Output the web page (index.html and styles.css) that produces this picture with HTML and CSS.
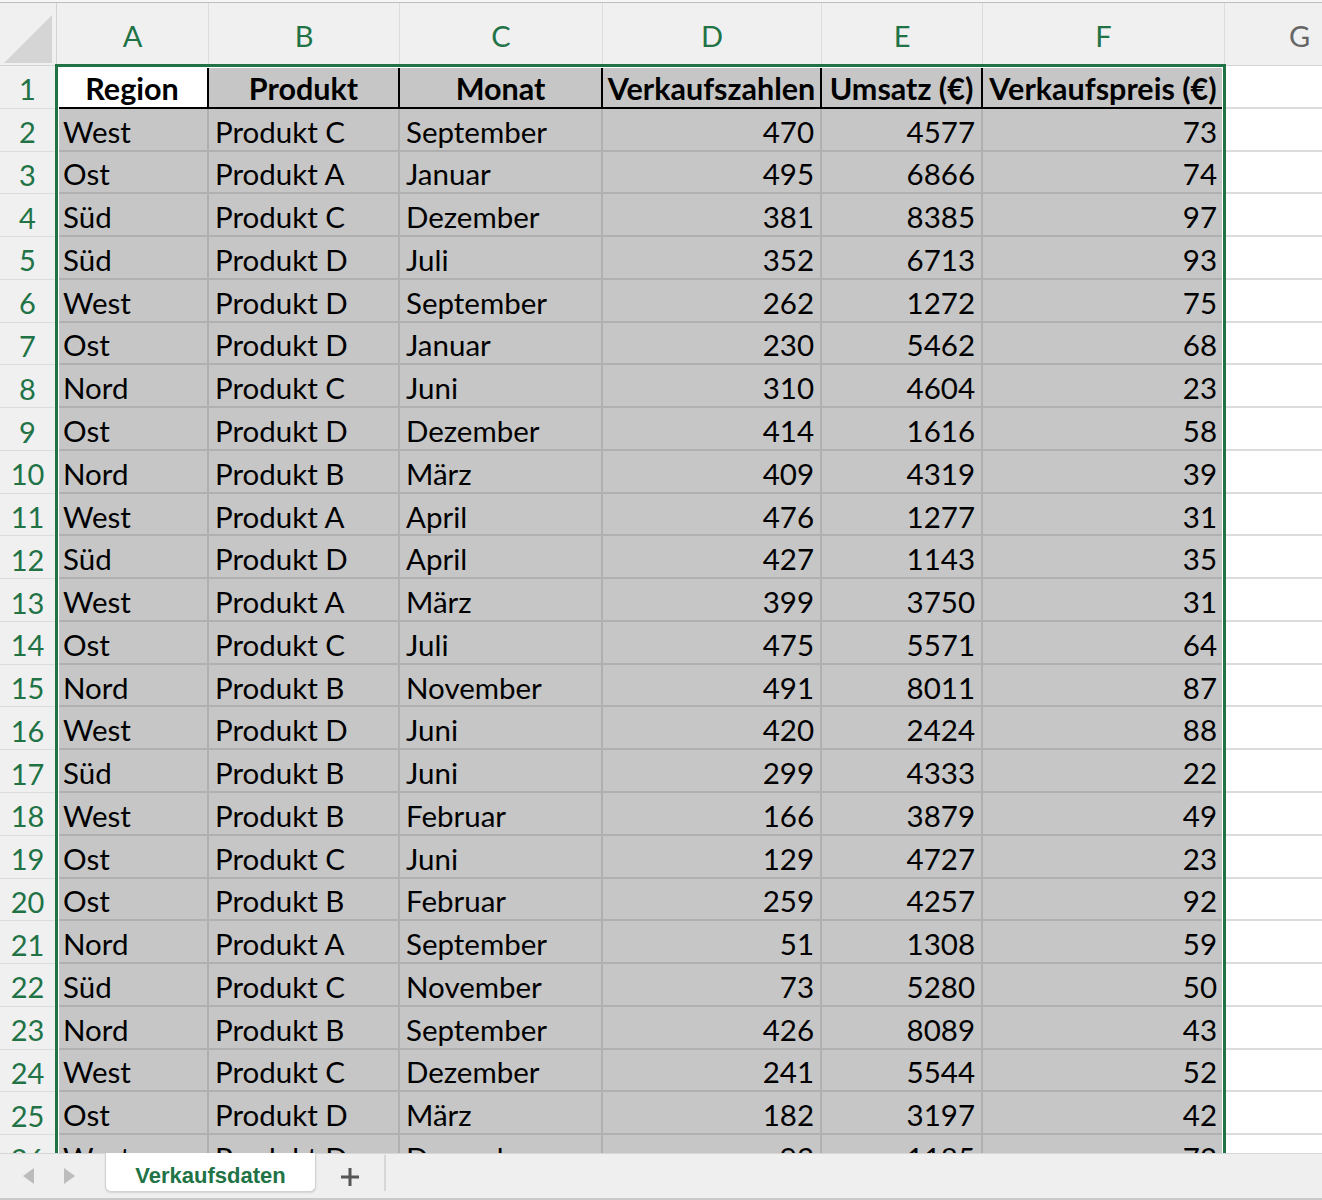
FILE: index.html
```html
<!DOCTYPE html>
<html lang="de">
<head>
<meta charset="utf-8">
<title>Verkaufsdaten</title>
<link rel="stylesheet" href="styles.css">
</head>
<body>
<div class="app">
  <div class="sheet">
    <div class="topline"></div>
    <div class="grid">
      <div class="corner"><span class="tri"></span></div>
      <div class="ch on">A</div><div class="ch on">B</div><div class="ch on">C</div><div class="ch on">D</div><div class="ch on">E</div><div class="ch on">F</div><div class="ch">G</div>

      <div class="rh">1</div><div class="c hd act">Region</div><div class="c hd">Produkt</div><div class="c hd">Monat</div><div class="c hd">Verkaufszahlen</div><div class="c hd">Umsatz (€)</div><div class="c hd">Verkaufspreis (€)</div><div class="e"></div>
      <div class="rh">2</div><div class="c">West</div><div class="c">Produkt C</div><div class="c">September</div><div class="c n">470</div><div class="c n">4577</div><div class="c n">73</div><div class="e"></div>
      <div class="rh">3</div><div class="c">Ost</div><div class="c">Produkt A</div><div class="c">Januar</div><div class="c n">495</div><div class="c n">6866</div><div class="c n">74</div><div class="e"></div>
      <div class="rh">4</div><div class="c">Süd</div><div class="c">Produkt C</div><div class="c">Dezember</div><div class="c n">381</div><div class="c n">8385</div><div class="c n">97</div><div class="e"></div>
      <div class="rh">5</div><div class="c">Süd</div><div class="c">Produkt D</div><div class="c">Juli</div><div class="c n">352</div><div class="c n">6713</div><div class="c n">93</div><div class="e"></div>
      <div class="rh">6</div><div class="c">West</div><div class="c">Produkt D</div><div class="c">September</div><div class="c n">262</div><div class="c n">1272</div><div class="c n">75</div><div class="e"></div>
      <div class="rh">7</div><div class="c">Ost</div><div class="c">Produkt D</div><div class="c">Januar</div><div class="c n">230</div><div class="c n">5462</div><div class="c n">68</div><div class="e"></div>
      <div class="rh">8</div><div class="c">Nord</div><div class="c">Produkt C</div><div class="c">Juni</div><div class="c n">310</div><div class="c n">4604</div><div class="c n">23</div><div class="e"></div>
      <div class="rh">9</div><div class="c">Ost</div><div class="c">Produkt D</div><div class="c">Dezember</div><div class="c n">414</div><div class="c n">1616</div><div class="c n">58</div><div class="e"></div>
      <div class="rh">10</div><div class="c">Nord</div><div class="c">Produkt B</div><div class="c">März</div><div class="c n">409</div><div class="c n">4319</div><div class="c n">39</div><div class="e"></div>
      <div class="rh">11</div><div class="c">West</div><div class="c">Produkt A</div><div class="c">April</div><div class="c n">476</div><div class="c n">1277</div><div class="c n">31</div><div class="e"></div>
      <div class="rh">12</div><div class="c">Süd</div><div class="c">Produkt D</div><div class="c">April</div><div class="c n">427</div><div class="c n">1143</div><div class="c n">35</div><div class="e"></div>
      <div class="rh">13</div><div class="c">West</div><div class="c">Produkt A</div><div class="c">März</div><div class="c n">399</div><div class="c n">3750</div><div class="c n">31</div><div class="e"></div>
      <div class="rh">14</div><div class="c">Ost</div><div class="c">Produkt C</div><div class="c">Juli</div><div class="c n">475</div><div class="c n">5571</div><div class="c n">64</div><div class="e"></div>
      <div class="rh">15</div><div class="c">Nord</div><div class="c">Produkt B</div><div class="c">November</div><div class="c n">491</div><div class="c n">8011</div><div class="c n">87</div><div class="e"></div>
      <div class="rh">16</div><div class="c">West</div><div class="c">Produkt D</div><div class="c">Juni</div><div class="c n">420</div><div class="c n">2424</div><div class="c n">88</div><div class="e"></div>
      <div class="rh">17</div><div class="c">Süd</div><div class="c">Produkt B</div><div class="c">Juni</div><div class="c n">299</div><div class="c n">4333</div><div class="c n">22</div><div class="e"></div>
      <div class="rh">18</div><div class="c">West</div><div class="c">Produkt B</div><div class="c">Februar</div><div class="c n">166</div><div class="c n">3879</div><div class="c n">49</div><div class="e"></div>
      <div class="rh">19</div><div class="c">Ost</div><div class="c">Produkt C</div><div class="c">Juni</div><div class="c n">129</div><div class="c n">4727</div><div class="c n">23</div><div class="e"></div>
      <div class="rh">20</div><div class="c">Ost</div><div class="c">Produkt B</div><div class="c">Februar</div><div class="c n">259</div><div class="c n">4257</div><div class="c n">92</div><div class="e"></div>
      <div class="rh">21</div><div class="c">Nord</div><div class="c">Produkt A</div><div class="c">September</div><div class="c n">51</div><div class="c n">1308</div><div class="c n">59</div><div class="e"></div>
      <div class="rh">22</div><div class="c">Süd</div><div class="c">Produkt C</div><div class="c">November</div><div class="c n">73</div><div class="c n">5280</div><div class="c n">50</div><div class="e"></div>
      <div class="rh">23</div><div class="c">Nord</div><div class="c">Produkt B</div><div class="c">September</div><div class="c n">426</div><div class="c n">8089</div><div class="c n">43</div><div class="e"></div>
      <div class="rh">24</div><div class="c">West</div><div class="c">Produkt C</div><div class="c">Dezember</div><div class="c n">241</div><div class="c n">5544</div><div class="c n">52</div><div class="e"></div>
      <div class="rh">25</div><div class="c">Ost</div><div class="c">Produkt D</div><div class="c">März</div><div class="c n">182</div><div class="c n">3197</div><div class="c n">42</div><div class="e"></div>
      <div class="rh">26</div><div class="c">West</div><div class="c">Produkt D</div><div class="c">Dezember</div><div class="c n">93</div><div class="c n">1185</div><div class="c n">72</div><div class="e"></div>

      <div class="selection"></div>
    </div>
  </div>
  <div class="tabbar">
    <div class="navs">
      <svg class="nav" width="14" height="16" viewBox="0 0 14 16"><polygon points="12,0 12,16 1,8" /></svg>
      <svg class="nav" width="14" height="16" viewBox="0 0 14 16"><polygon points="2,0 2,16 13,8" /></svg>
    </div>
    <div class="tab">Verkaufsdaten</div>
    <div class="add"><svg width="20" height="20" viewBox="0 0 20 20"><rect x="8.5" y="1" width="3" height="18"/><rect x="1" y="8.5" width="18" height="3"/></svg></div>
    <div class="sep"></div>
  </div>
</div>
</body>
</html>
```

FILE: styles.css
```css
html, body {
  margin: 0;
  padding: 0;
  background: #ffffff;
}
.app {
  width: 1322px;
  height: 1200px;
  display: flex;
  flex-direction: column;
  overflow: hidden;
}
.sheet {
  flex: 1;
  overflow: hidden;
  position: relative;
}
.topline {
  height: 3px;
  background: #f6f6f6;
  border-bottom: 1px solid #bdbdbd;
  box-sizing: border-box;
}
.grid {
  position: relative;
  display: grid;
  grid-template-columns: 57px 152px 191px 203px 219px 161px 242px 150px;
  grid-template-rows: 63px;
  grid-auto-rows: 42.78px;
  font-family: Lato, "Open Sans", sans-serif;
}
.corner {
  background: #f0f0f0;
  border-right: 1px solid #d4d4d4;
  border-bottom: 1px solid #d4d4d4;
  position: relative;
}
.tri {
  position: absolute;
  right: 4px;
  bottom: 2px;
  width: 0;
  height: 0;
  border-left: 48px solid transparent;
  border-bottom: 48px solid #d5d5d5;
}
.ch {
  background: #f0f0f0;
  border-right: 1px solid #dcdcdc;
  border-bottom: 1px solid #d4d4d4;
  display: flex;
  align-items: center;
  justify-content: center;
  font-size: 29px;
  color: #666666;
  padding-top: 3px;
  box-sizing: border-box;
}
.ch.on {
  color: #217346;
  border-bottom: 2px solid #217346;
}
.rh {
  background: #f0f0f0;
  border-bottom: 1px solid #dcdcdc;
  border-right: 2px solid #217346;
  display: flex;
  align-items: center;
  justify-content: center;
  font-size: 29px;
  color: #217346;
  box-sizing: border-box;
  padding-top: 4px;
}
.c {
  background: #c6c6c6;
  border-right: 2px solid #b0b0b0;
  border-bottom: 2px solid #b0b0b0;
  display: flex;
  align-items: center;
  padding: 4px 6px 0 6px;
  font-size: 29.5px;
  color: #000000;
  white-space: nowrap;
  overflow: hidden;
  box-sizing: border-box;
}
.c.n {
  justify-content: flex-end;
}
.c.hd {
  font-weight: 700;
  font-size: 30.5px;
  justify-content: center;
  border-right-color: #000000;
  border-bottom-color: #000000;
  padding: 4px 0 0 0;
}
.c.act {
  background: #ffffff;
}
.e {
  background: #ffffff;
  border-bottom: 2px solid #dcdcdc;
}
.selection {
  position: absolute;
  left: 55px;
  top: 61px;
  width: 1171px;
  height: 2000px;
  border: 3px solid #217346;
  box-sizing: border-box;
  box-shadow: inset 0 0 0 1px #ffffff;
  pointer-events: none;
}
.tabbar {
  height: 47px;
  flex: none;
  background: #efefef;
  border-top: 1px solid #d6d6d6;
  border-bottom: 2px solid #c9c9c9;
  box-sizing: border-box;
  display: flex;
  align-items: flex-start;
  position: relative;
  z-index: 2;
}
.navs {
  display: flex;
  gap: 26px;
  padding: 14px 0 0 22px;
  width: 83px;
  box-sizing: content-box;
}
.nav {
  fill: #bcbcbc;
}
.tab {
  width: 211px;
  height: 39px;
  margin-top: -1px;
  background: #ffffff;
  border: 1px solid #d2d2d2;
  border-top: none;
  border-radius: 0 0 6px 6px;
  box-shadow: 0 1px 2px rgba(0, 0, 0, 0.12);
  box-sizing: border-box;
  display: flex;
  align-items: center;
  justify-content: center;
  font-family: "Liberation Sans", Arial, sans-serif;
  font-weight: 700;
  font-size: 22px;
  color: #217346;
  padding-top: 7px;
}
.add {
  width: 68px;
  display: flex;
  justify-content: center;
  padding-top: 13px;
  fill: #575757;
}
.sep {
  width: 2px;
  height: 36px;
  margin-top: 1px;
  background: #d6d6d6;
}
```
